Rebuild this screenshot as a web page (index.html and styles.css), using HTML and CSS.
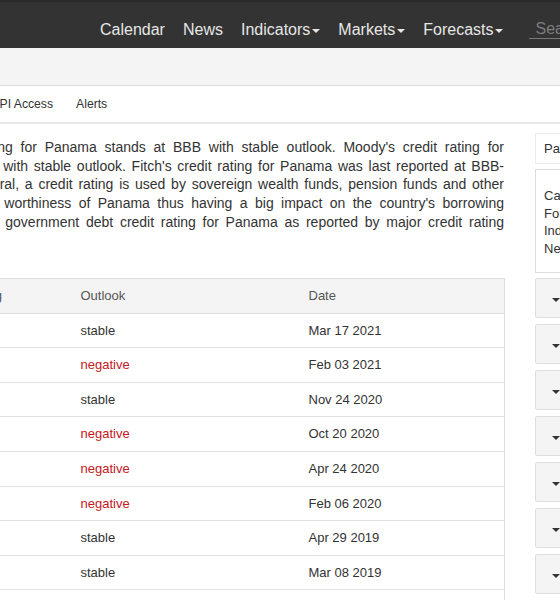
FILE: index.html
```html
<!DOCTYPE html>
<html lang="en">
<head>
<meta charset="utf-8">
<title>Panama - Credit Rating</title>
<link rel="stylesheet" href="styles.css">
</head>
<body>
<header class="topbar">
  <nav class="topnav">
    <a class="nav-item" href="#">Calendar</a>
    <a class="nav-item" href="#">News</a>
    <a class="nav-item" href="#">Indicators<span class="caret"></span></a>
    <a class="nav-item" href="#">Markets<span class="caret"></span></a>
    <a class="nav-item" href="#">Forecasts<span class="caret"></span></a>
    <div class="search"><input class="search-input" type="text" placeholder="Search"></div>
  </nav>
</header>
<div class="band"></div>
<div class="subnav">
  <div class="subnav-inner">
    <a class="sub-item" href="#">API Access</a>
    <a class="sub-item" href="#">Alerts</a>
  </div>
</div>
<div class="layout">
  <main class="main">
    <p class="desc">
      <span class="ln">Standard &amp; Poor's credit rating for Panama stands at BBB with stable outlook. Moody's credit rating for</span>
      <span class="ln">Panama was last set at Baa2 with stable outlook. Fitch's credit rating for Panama was last reported at BBB-</span>
      <span class="ln">with negative outlook. In general, a credit rating is used by sovereign wealth funds, pension funds and other</span>
      <span class="ln">investors to gauge the credit worthiness of Panama thus having a big impact on the country's borrowing</span>
      <span class="ln">costs. This page includes the government debt credit rating for Panama as reported by major credit rating</span>
      <span class="ln-last">agencies.</span>
    </p>
    <table class="ratings">
      <colgroup>
        <col class="c-agency"><col class="c-rating"><col class="c-outlook"><col class="c-date">
      </colgroup>
      <thead>
        <tr><th>Agency</th><th>Rating</th><th>Outlook</th><th>Date</th></tr>
      </thead>
      <tbody>
        <tr><td>Moody's</td><td>Baa2</td><td>stable</td><td>Mar 17 2021</td></tr>
        <tr><td>Fitch</td><td>BBB-</td><td class="neg">negative</td><td>Feb 03 2021</td></tr>
        <tr><td>S&amp;P</td><td>BBB</td><td>stable</td><td>Nov 24 2020</td></tr>
        <tr><td>S&amp;P</td><td>BBB</td><td class="neg">negative</td><td>Oct 20 2020</td></tr>
        <tr><td>Moody's</td><td>Baa1</td><td class="neg">negative</td><td>Apr 24 2020</td></tr>
        <tr><td>Fitch</td><td>BBB</td><td class="neg">negative</td><td>Feb 06 2020</td></tr>
        <tr><td>S&amp;P</td><td>BBB+</td><td>stable</td><td>Apr 29 2019</td></tr>
        <tr><td>Moody's</td><td>Baa1</td><td>stable</td><td>Mar 08 2019</td></tr>
        <tr><td>Fitch</td><td>BBB</td><td>stable</td><td>Mar 14 2018</td></tr>
      </tbody>
    </table>
  </main>
  <aside class="side">
    <div class="side-search">Panama</div>
    <div class="side-links">
      <div>Calendar</div>
      <div>Forecast</div>
      <div>Indicators</div>
      <div>News</div>
    </div>
    <div class="side-btn"><span class="caret dark"></span></div>
    <div class="side-btn"><span class="caret dark"></span></div>
    <div class="side-btn"><span class="caret dark"></span></div>
    <div class="side-btn"><span class="caret dark"></span></div>
    <div class="side-btn"><span class="caret dark"></span></div>
    <div class="side-btn"><span class="caret dark"></span></div>
    <div class="side-btn"><span class="caret dark"></span></div>
    <div class="side-btn"><span class="caret dark"></span></div>
  </aside>
</div>
</body>
</html>
```
FILE: styles.css
```css
html, body {
  margin: 0;
  padding: 0;
}
body {
  width: 560px;
  overflow: hidden;
  font-family: "Liberation Sans", Arial, Helvetica, sans-serif;
  color: #333;
  background: #fff;
}
a {
  text-decoration: none;
  color: inherit;
}

/* top navigation */
.topbar {
  height: 48px;
  box-sizing: border-box;
  background: #333;
  border-top: 2px solid #2a2a2a;
}
.topnav {
  display: flex;
  align-items: flex-start;
  padding-left: 91px;
  white-space: nowrap;
}
.nav-item {
  padding: 18px 9px 0;
  font-size: 16px;
  line-height: 20px;
  color: #e6e6e6;
}
.caret {
  display: inline-block;
  width: 0;
  height: 0;
  margin-left: 2px;
  vertical-align: middle;
  border-top: 4px solid;
  border-left: 4px solid transparent;
  border-right: 4px solid transparent;
}
.search {
  margin-left: 17px;
  margin-top: 17px;
}
.search-input {
  display: block;
  width: 160px;
  height: 19px;
  box-sizing: content-box;
  padding: 0 0 0 6px;
  margin: 0;
  border: 0;
  border-bottom: 1px solid #777;
  background: transparent;
  font: 16px/19px "Liberation Sans", Arial, sans-serif;
  color: #ddd;
  outline: none;
}
.search-input::placeholder {
  color: #7d7d7d;
}

/* grey band + sub navigation */
.band {
  height: 37px;
  background: #f4f4f4;
  border-bottom: 1px solid #dcdcdc;
}
.subnav {
  height: 36px;
  border-bottom: 2px solid #e8e8e8;
}
.subnav-inner {
  display: flex;
  align-items: center;
  height: 36px;
  margin-left: -8.6px;
  gap: 23px;
}
.sub-item {
  font-size: 12.2px;
  color: #333;
}

/* layout */
.layout {
  display: flex;
  align-items: flex-start;
  margin-left: -193px;
}
.main {
  width: 697px;
  flex: none;
}
.desc {
  margin: 14px 0 27.8px;
  font-size: 14px;
  line-height: 18.7px;
  color: #333;
}
.ln {
  display: block;
  text-align: justify;
  text-align-last: justify;
}
.ln-last {
  display: block;
}

/* table */
.ratings {
  width: 697px;
  table-layout: fixed;
  border-collapse: collapse;
  border: 1px solid #ddd;
  font-size: 13px;
}
.c-agency { width: 149px; }
.c-rating { width: 116px; }
.c-outlook { width: 228px; }
.c-date { width: 204px; }
.ratings th {
  padding: 8px;
  line-height: 17.6px;
  text-align: left;
  font-weight: normal;
  color: #555;
  background: #f4f4f4;
  border-bottom: 1px solid #ddd;
}
.ratings td {
  padding: 8px;
  line-height: 17.6px;
  color: #333;
  border-top: 1px solid #e1e1e1;
}
.ratings td.neg {
  color: #c3171c;
}

/* sidebar */
.side {
  flex: none;
  width: 220px;
  margin-left: 31px;
  margin-top: 9px;
  font-size: 13px;
}
.side-search {
  height: 31px;
  box-sizing: border-box;
  padding-left: 8px;
  line-height: 29px;
  border: 1px solid #ebebeb;
  color: #333;
}
.side-links {
  margin-top: 5px;
  padding: 17px 8px 15px;
  line-height: 17.5px;
  border: 1px solid #ddd;
  color: #333;
}
.side-btn {
  height: 40px;
  box-sizing: border-box;
  margin-top: 6px;
  padding: 19px 0 0 16px;
  background: #f4f4f4;
  border: 1px solid #dedede;
  border-radius: 2px;
}
.side-links + .side-btn {
  margin-top: 5px;
}
.caret.dark {
  display: block;
  margin-left: 0;
  color: #333;
}
```
